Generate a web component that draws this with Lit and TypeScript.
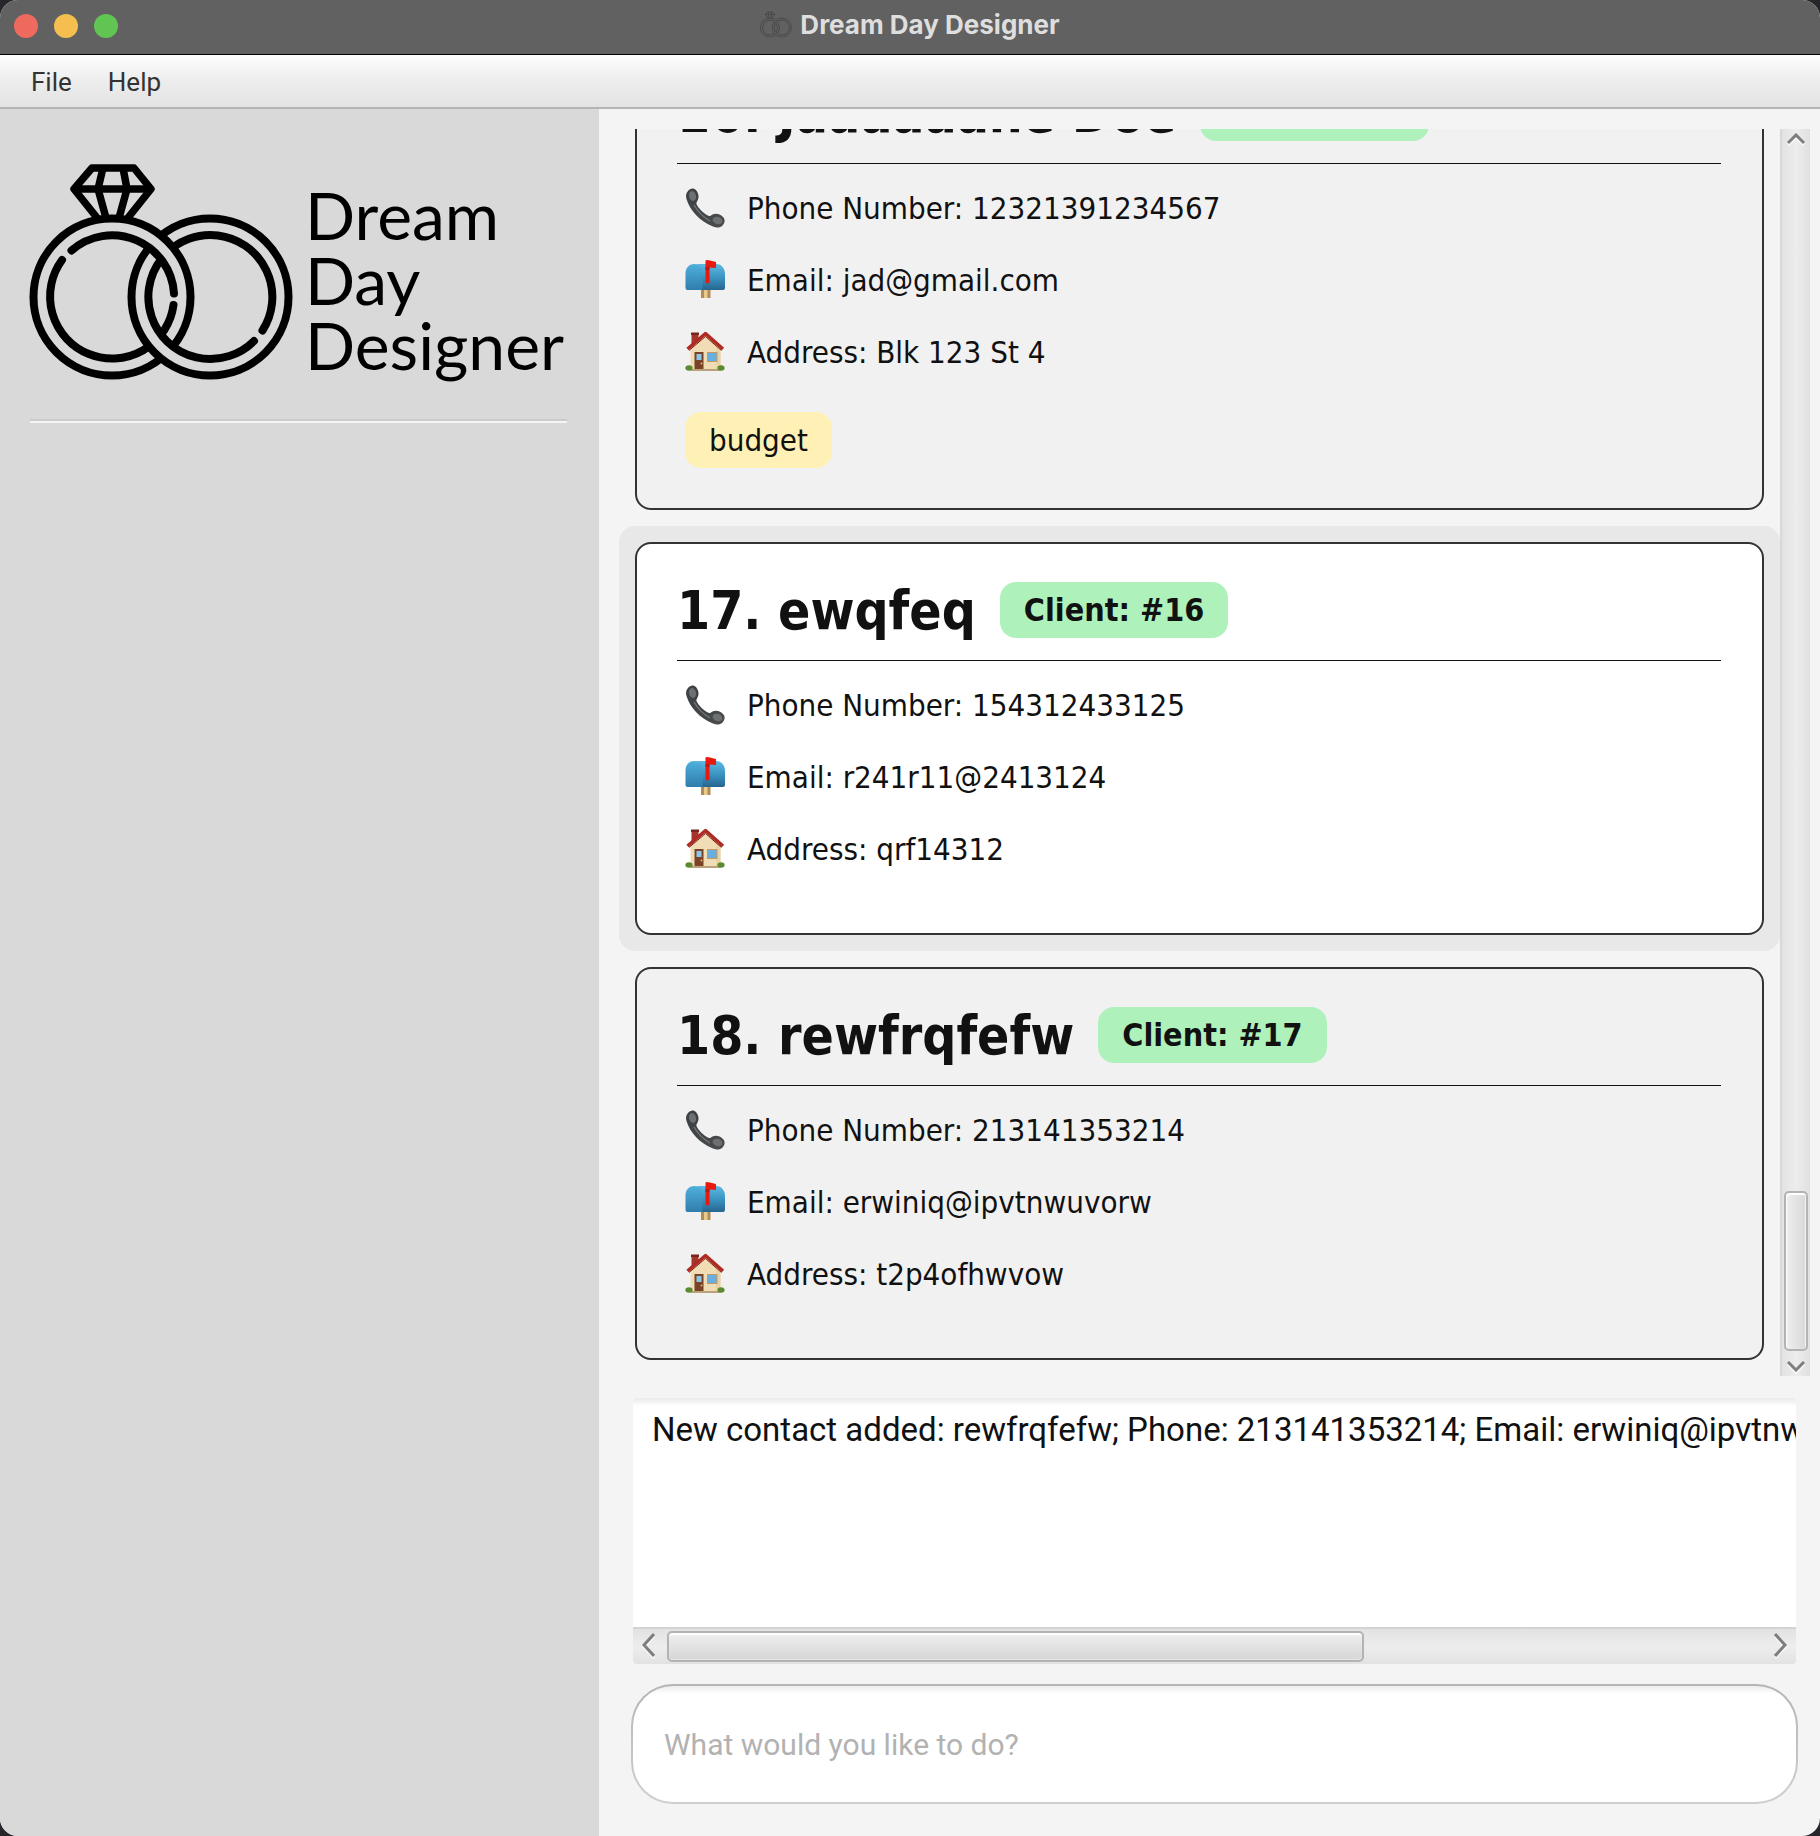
import { LitElement, html, css, svg, nothing } from "lit";
import { customElement, property, state } from "lit/decorators.js";

interface Contact {
  index: number;
  name: string;
  role: string;
  phone: string;
  email: string;
  address: string;
  tags: string[];
}

const CONTACTS: Contact[] = [
  { index: 16, name: "Jaaaaaane Doe", role: "Client: #15", phone: "12321391234567", email: "jad@gmail.com", address: "Blk 123 St 4", tags: ["budget"] },
  { index: 17, name: "ewqfeq", role: "Client: #16", phone: "154312433125", email: "r241r11@2413124", address: "qrf14312", tags: [] },
  { index: 18, name: "rewfrqfefw", role: "Client: #17", phone: "213141353214", email: "erwiniq@ipvtnwuvorw", address: "t2p4ofhwvow", tags: [] },
];

/** Two interlocked wedding rings, the left one set with a diamond. */
@customElement("ring-mark")
export class RingMark extends LitElement {
  static styles = css`
    :host { display: block; }
    .mark { display: block; width: 100%; height: auto; overflow: visible; }
  `;

  render() {
    return html`<svg class="mark" viewBox="1 0 264 221" fill="none" stroke="currentColor" stroke-width="8" aria-hidden="true">
      <defs>
        <clipPath id="upper"><rect x="0" y="0" width="265" height="137"></rect></clipPath>
        <clipPath id="lower"><rect x="0" y="137" width="265" height="84"></rect></clipPath>
        <mask id="under-left" maskUnits="userSpaceOnUse" x="0" y="0" width="265" height="221">
          <rect width="265" height="221" fill="#fff" stroke="none"></rect>
          <circle cx="83" cy="137" r="70" stroke="#000" stroke-width="22" clip-path="url(#upper)"></circle>
        </mask>
        <mask id="under-right" maskUnits="userSpaceOnUse" x="0" y="0" width="265" height="221">
          <rect width="265" height="221" fill="#fff" stroke="none"></rect>
          <circle cx="181" cy="137" r="70" stroke="#000" stroke-width="22" clip-path="url(#lower)"></circle>
        </mask>
      </defs>
      <g stroke-width="7.5" stroke-linejoin="round">
        <path d="M69 59 L45 29 L63 8 H105 L122 29 L98 59"></path>
        <path d="M45 29 H122"></path>
        <path d="M74 8 L69 29 L77 58 M94 8 L98 29 L90 58"></path>
      </g>
      <g mask="url(#under-right)" stroke-linecap="round">
        <circle cx="83" cy="137" r="78.500"></circle>
        <path d="M42.500 90.500 A62 62 0 0 1 145 133.500"></path>
        <path d="M144.500 145 A62 62 0 1 1 33 100"></path>
      </g>
      <g mask="url(#under-left)" stroke-linecap="round">
        <circle cx="181" cy="137" r="78.500"></circle>
        <path d="M225 181 A62 62 0 1 1 233.500 170.500"></path>
      </g>
    </svg>`;
  }
}

const phoneIcon = svg`
  <defs><linearGradient id="hs" x1="0" y1="0" x2="1" y2="1"><stop offset="0" stop-color="#3c4042"></stop><stop offset="1" stop-color="#4a4c4e"></stop></linearGradient></defs>
  <path fill="url(#hs)" d="M3 3 C5 0 9 -0.500 11 2 C13.500 5 14.500 9 12.500 12.500 C12 14 11 14.500 11.500 16 C13.500 20.500 18.500 25.500 24 28 C25.500 28.500 26 27 27.500 26.500 C31 25 35 26 38 29 C40.500 31.500 40 35 37.500 37.500 C35 40 31.500 40 28 38.500 C14.500 33 5 22.500 1.500 11 C0.500 8 1 5 3 3 Z"></path>
  <ellipse cx="7.500" cy="8" rx="3.500" ry="5" fill="#6c7072" transform="rotate(-15 7.500 8)"></ellipse>
  <ellipse cx="32.500" cy="32.500" rx="5" ry="3.600" fill="#6c7072" transform="rotate(18 32.500 32.500)"></ellipse>
  <path d="M9 17 C13 24 18 29 25 33" fill="none" stroke="#74787a" stroke-width="1.300"></path>`;

const mailboxIcon = svg`
  <defs>
    <linearGradient id="mb" x1="0" y1="0" x2="0" y2="1"><stop offset="0" stop-color="#5cb9e0"></stop><stop offset="0.500" stop-color="#3b95c4"></stop><stop offset="1" stop-color="#27658f"></stop></linearGradient>
    <linearGradient id="mf" x1="0" y1="0" x2="0" y2="1"><stop offset="0" stop-color="#4fb0dc"></stop><stop offset="1" stop-color="#2f7dad"></stop></linearGradient>
  </defs>
  <rect x="16" y="29" width="9.500" height="9" fill="#b28c56"></rect>
  <rect x="19" y="29" width="3.500" height="9" fill="#e9c98c"></rect>
  <path d="M9 4 H31 C37 4 40 9 40 14 V28 Q40 30 38 30 H16 V12 C16 7 13 4 9 4 Z" fill="url(#mb)"></path>
  <path d="M0.500 13 C0.500 8 4 4 9 4 C14 4 17.500 8 17.500 13 V30 H2.500 Q0.500 30 0.500 28 Z" fill="url(#mf)"></path>
  <path d="M20.500 1 Q20.500 0 21.500 0 L25 0.500 L31 2 V8 L24.500 7.500 V22 Q22.500 25.500 20.500 22 Z" fill="#e8190f"></path>
  <path d="M20.500 7 H24.500 V10 H20.500 Z" fill="#c51510"></path>`;

const houseIcon = svg`
  <rect x="6.500" y="1" width="7" height="13" fill="#a3362c"></rect>
  <rect x="6" y="0.500" width="8" height="2.500" fill="#7d231c"></rect>
  <path d="M5.500 16 L20.500 3 L35.500 16 V38 H5.500 Z" fill="#f1ddb5"></path>
  <path d="M20.500 3 L35.500 16 V38 H31 V16 Z" fill="#e9d2a3"></path>
  <path d="M2.500 17 L20.500 1.500 L38 17" fill="none" stroke="#b02a24" stroke-width="3.400" stroke-linejoin="round"></path>
  <path d="M4 18.500 L20.500 4.500 L36.500 18.500" fill="none" stroke="#7c1a18" stroke-width="1"></path>
  <rect x="9.500" y="20" width="9" height="18" fill="#7a4226"></rect>
  <rect x="11.500" y="22" width="5" height="6" fill="#8cc8ec"></rect>
  <circle cx="16.500" cy="31.500" r="0.900" fill="#e3bd6a"></circle>
  <rect x="22" y="20" width="10.500" height="10" fill="#c39a63"></rect>
  <rect x="23" y="21" width="8.500" height="8" fill="#69aee0"></rect>
  <rect x="5.500" y="37" width="30" height="2" fill="#b9a27b"></rect>
  <ellipse cx="4" cy="36" rx="3.600" ry="2.800" fill="#5c8a32"></ellipse>
  <ellipse cx="36" cy="36" rx="3.600" ry="2.800" fill="#5c8a32"></ellipse>`;

@customElement("contact-card")
export class ContactCard extends LitElement {
  @property({ attribute: false }) contact!: Contact;
  @property({ type: Boolean, reflect: true }) selected = false;

  static styles = css`
    :host {
      display: block;
      flex: none;
      padding: 16px;
      border-radius: 16px;
      color: #111;
      font: 31px/40px "DejaVu Sans Condensed", "DejaVu Sans", sans-serif;
    }
    :host([selected]) { background: #e8e8e8; }
    .card {
      padding: 34px 41px 40px 40px;
      border: 2px solid #333;
      border-radius: 16px;
      background: #f1f1f1;
    }
    :host([selected]) .card { background: #fff; }
    .header {
      display: flex;
      align-items: center;
      gap: 24px;
      height: 64px;
      padding-bottom: 18px;
      border-bottom: 1px solid #111;
    }
    .name { margin: 0; padding-top: 2px; font-size: 53px; line-height: 62px; font-weight: bold; }
    .badge { padding: 8px 24px; border-radius: 16px; }
    .role { background: #aff1bb; font-size: 32px; font-weight: bold; }
    .rows { margin: 8px 0; padding: 0 8px; list-style: none; }
    .row { display: flex; align-items: center; gap: 22px; height: 72px; }
    .icon { flex: none; width: 40px; height: 40px; overflow: visible; }
    .tags { display: flex; gap: 8px; margin-top: 24px; padding-left: 8px; }
    .tag { background: #fff1b5; }
  `;

  private row(icon: unknown, text: string) {
    return html`<li class="row"><svg class="icon" viewBox="0 0 40 40" aria-hidden="true">${icon}</svg><span>${text}</span></li>`;
  }

  render() {
    const c = this.contact;
    return html`<article class="card">
      <header class="header">
        <h2 class="name">${c.index}. ${c.name}</h2>
        <span class="badge role">${c.role}</span>
      </header>
      <ul class="rows">
        ${this.row(phoneIcon, `Phone Number: ${c.phone}`)}
        ${this.row(mailboxIcon, `Email: ${c.email}`)}
        ${this.row(houseIcon, `Address: ${c.address}`)}
      </ul>
      ${c.tags.length ? html`<div class="tags">${c.tags.map((t) => html`<span class="badge tag">${t}</span>`)}</div>` : nothing}
    </article>`;
  }
}

@customElement("app-root")
export class AppRoot extends LitElement {
  @state() private selectedIndex = 17;

  static styles = css`
    :host {
      display: block;
      background: #26262b;
      font-family: Inter, "Liberation Sans", sans-serif;
    }
    .window {
      display: flex;
      flex-direction: column;
      height: 100vh;
      overflow: hidden;
      border-radius: 18px;
      background: #f4f4f4;
    }
    button { margin: 0; padding: 0; border: 0; background: none; font: inherit; color: inherit; }

    .titlebar {
      flex: none;
      display: grid;
      grid-template-columns: 1fr auto 1fr;
      align-items: center;
      height: 54px;
      border-bottom: 1px solid #000;
      background: #616161;
    }
    .lights { display: flex; gap: 16px; padding: 0 14px 2px; }
    .light { width: 24px; height: 24px; border-radius: 50%; }
    .close { background: #ee6a5f; }
    .minimise { background: #f5bf4f; }
    .zoom { background: #61c554; }
    .title {
      display: flex;
      align-items: center;
      gap: 8px;
      margin: 0;
      padding-bottom: 4px;
      color: #dedede;
      font-size: 26px;
      line-height: 32px;
      font-weight: bold;
    }
    .title-icon { width: 32px; padding-bottom: 2px; color: #484848; }

    .menubar {
      flex: none;
      box-sizing: border-box;
      display: flex;
      gap: 36px;
      height: 54px;
      padding: 2px 31px 0;
      border-bottom: 2px solid #b4b4b4;
      background: linear-gradient(#fdfdfd, #ededed 50%, #e3e3e3);
      color: #333;
      font-family: Roboto, "Liberation Sans", sans-serif;
      font-size: 26px;
    }

    .body {
      flex: 1;
      min-height: 0;
      display: grid;
      grid-template-columns: minmax(0, 599fr) minmax(0, 1221fr);
    }
    .sidebar { padding: 51px 32px 0 30px; background: #d9d9d9; }
    .brand { display: flex; padding-bottom: 38px; border-bottom: 2px solid #cbcbcb; box-shadow: 0 2px #f5f5f5; }
    .brand-icon { flex: none; width: 264px; }
    .brand-name {
      margin: 22px 0 0 11px;
      color: #000;
      font: 66px/65px Lato, sans-serif;
      white-space: pre-line;
    }

    .main { display: flex; flex-direction: column; min-height: 0; padding-top: 20px; }
    .list-row { flex: 1; min-height: 0; display: flex; padding: 0 10px 0 20px; }
    .list {
      flex: 1;
      min-width: 0;
      display: flex;
      flex-direction: column;
      justify-content: flex-end;
      overflow: hidden;
    }

    .vbar {
      flex: none;
      width: 28px;
      display: flex;
      flex-direction: column;
      border-left: 2px solid #d8d8d8;
      background: linear-gradient(90deg, #e2e2e2, #ededed 50%, #e0e0e0);
    }
    .vstep { flex: none; box-sizing: border-box; height: 25px; display: flex; justify-content: center; }
    .up { align-items: flex-start; padding-top: 4px; }
    .down { align-items: flex-end; padding-bottom: 4px; }
    .vtrack { flex: 1; display: flex; flex-direction: column; justify-content: flex-end; padding: 0 2px; }
    .thumb { box-sizing: border-box; border: 2px solid #b3b3b3; border-radius: 5px; }
    .vthumb {
      height: 160px;
      background: linear-gradient(90deg, #efefef, #d8d8d8);
      box-shadow: inset 1px 2px 1px #fff, inset -1px 0 1px #f4f4f4;
    }
    .arrow { fill: none; stroke: #7e7e7e; stroke-width: 3; filter: drop-shadow(0 2px 0 #f8f8f8); }

    .result { flex: none; display: flex; flex-direction: column; margin: 22px 24px 0 34px; }
    .message {
      box-sizing: border-box;
      display: block;
      width: 100%;
      height: 229px;
      margin: 0;
      padding: 12px 0 0 19px;
      border: 0;
      border-radius: 4px 4px 0 0;
      outline: 0;
      resize: none;
      overflow: hidden;
      background: linear-gradient(#e9e9e9, #fff 8px);
      color: #111;
      font: 33px/40px Roboto, "Liberation Sans", sans-serif;
    }
    .hbar {
      display: flex;
      height: 35px;
      border-top: 2px solid #d3d3d3;
      border-radius: 0 0 4px 4px;
      background: linear-gradient(#e2e2e2, #ededed 50%, #e2e2e2);
    }
    .hstep { flex: none; width: 34px; display: flex; align-items: center; padding: 0 9px 3px; box-sizing: border-box; }
    .left { justify-content: flex-start; }
    .right { justify-content: flex-end; }
    .htrack { flex: 1; display: flex; padding: 2px 0; }
    .hthumb {
      width: calc(100% * 7 / 11);
      background: linear-gradient(#efefef, #d6d6d6);
      box-shadow: inset 0 2px 1px #fff, inset 0 -1px 1px #e8e8e8;
    }

    .command {
      flex: none;
      box-sizing: border-box;
      height: 120px;
      margin: 20px 22px 32px 32px;
      padding: 0 31px;
      border: 2px solid transparent;
      border-radius: 42px;
      outline: 0;
      background:
        linear-gradient(#ececec, #fff 8px) padding-box,
        linear-gradient(#b5b5b5, #cfcfcf) border-box;
      color: #111;
      font: 30px/36px Roboto, "Liberation Sans", sans-serif;
    }
    .command::placeholder { color: #b2b2b2; opacity: 1; }
  `;

  render() {
    return html`<div class="window">
      <header class="titlebar">
        <div class="lights">
          <button class="light close" aria-label="Close"></button>
          <button class="light minimise" aria-label="Minimise"></button>
          <button class="light zoom" aria-label="Zoom"></button>
        </div>
        <h1 class="title"><ring-mark class="title-icon"></ring-mark>Dream Day Designer</h1>
      </header>
      <nav class="menubar"><button>File</button><button>Help</button></nav>
      <div class="body">
        <aside class="sidebar">
          <div class="brand">
            <ring-mark class="brand-icon"></ring-mark>
            <p class="brand-name">${"Dream\nDay\nDesigner"}</p>
          </div>
        </aside>
        <main class="main">
          <div class="list-row">
            <div class="list">
              ${CONTACTS.map((c) => html`<contact-card .contact=${c} ?selected=${c.index === this.selectedIndex} @click=${() => (this.selectedIndex = c.index)}></contact-card>`)}
            </div>
            <div class="vbar">
              <button class="vstep up" aria-label="Scroll up"><svg class="arrow" width="18" height="12" viewBox="0 0 18 12"><path d="M1 10 L9 2 L17 10"></path></svg></button>
              <div class="vtrack"><div class="thumb vthumb"></div></div>
              <button class="vstep down" aria-label="Scroll down"><svg class="arrow" width="18" height="12" viewBox="0 0 18 12"><path d="M1 2 L9 10 L17 2"></path></svg></button>
            </div>
          </div>
          <div class="result">
            <textarea class="message" readonly wrap="off" aria-label="Result" .value=${"New contact added: rewfrqfefw; Phone: 213141353214; Email: erwiniq@ipvtnwuvorw; Address: t2p4ofhwvow"}></textarea>
            <div class="hbar">
              <button class="hstep left" aria-label="Scroll left"><svg class="arrow" width="13" height="24" viewBox="0 0 13 24"><path d="M12 1 L2 12 L12 23"></path></svg></button>
              <div class="htrack"><div class="thumb hthumb"></div></div>
              <button class="hstep right" aria-label="Scroll right"><svg class="arrow" width="13" height="24" viewBox="0 0 13 24"><path d="M1 1 L11 12 L1 23"></path></svg></button>
            </div>
          </div>
          <input class="command" type="text" aria-label="Command" placeholder="What would you like to do?">
        </main>
      </div>
    </div>`;
  }
}
